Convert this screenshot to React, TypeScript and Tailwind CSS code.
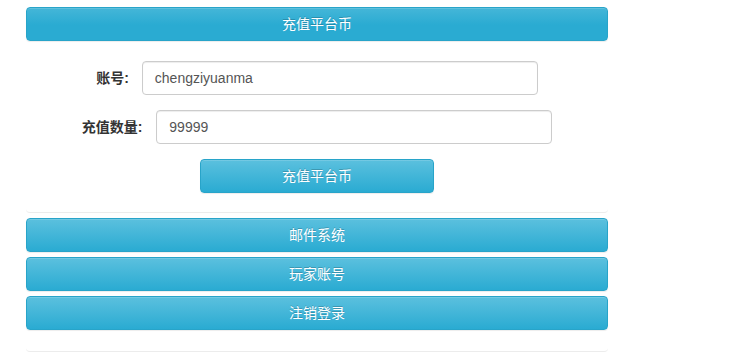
import React from "react";

const font = { fontFamily: '"Liberation Sans", "Noto Sans CJK SC", sans-serif' };

function InfoButton({ children, hover = false, className = "" }: { children: React.ReactNode; hover?: boolean; className?: string }) {
  return (
    <button
      type="button"
      className={
        "h-[34px] rounded-[4px] border border-[#28a4c9] text-white text-[14px] leading-[20px] text-center shadow-[inset_0_1px_0_rgba(255,255,255,0.15),0_1px_1px_rgba(0,0,0,0.075)] [text-shadow:0_-1px_0_rgba(0,0,0,0.2)] " +
        (hover
          ? "bg-[linear-gradient(to_bottom,#44b6d8_0px,#2aabd2_17px,#2aabd2_100%)] "
          : "bg-[linear-gradient(to_bottom,#5bc0de_0%,#2aabd2_100%)] ") +
        className
      }
    >
      {children}
    </button>
  );
}

export default function App() {
  return (
    <div className="w-[733px] h-[356px] bg-white text-[#333] text-[14px] overflow-hidden" style={font}>
      <div className="pl-[26px] w-[608px] pt-[7px]">
        <InfoButton hover className="w-full">充值平台币</InfoButton>
        <div className="rounded-b-[4px] border-b border-[#ececec] pt-[20px] pb-[19px] flex flex-col items-center">
          <div className="flex items-center gap-[13px]">
            <span className="font-bold">账号:</span>
            <div className="w-[396px] h-[34px] rounded-[4px] border border-[#ccc] px-[12px] flex items-center text-[#555] shadow-[inset_0_1px_1px_rgba(0,0,0,0.075)]">
              chengziyuanma
            </div>
          </div>
          <div className="flex items-center gap-[14px] mt-[15px]">
            <span className="font-bold">充值数量:</span>
            <div className="w-[396px] h-[34px] rounded-[4px] border border-[#ccc] px-[12px] flex items-center text-[#555] shadow-[inset_0_1px_1px_rgba(0,0,0,0.075)]">
              99999
            </div>
          </div>
          <InfoButton className="w-[234px] mt-[15px]">充值平台币</InfoButton>
        </div>
        <div className="rounded-b-[4px] border-b border-[#ececec] pt-[5px] pb-[21px] flex flex-col gap-[5px]">
          <InfoButton className="w-full">邮件系统</InfoButton>
          <InfoButton className="w-full">玩家账号</InfoButton>
          <InfoButton className="w-full">注销登录</InfoButton>
        </div>
      </div>
    </div>
  );
}
